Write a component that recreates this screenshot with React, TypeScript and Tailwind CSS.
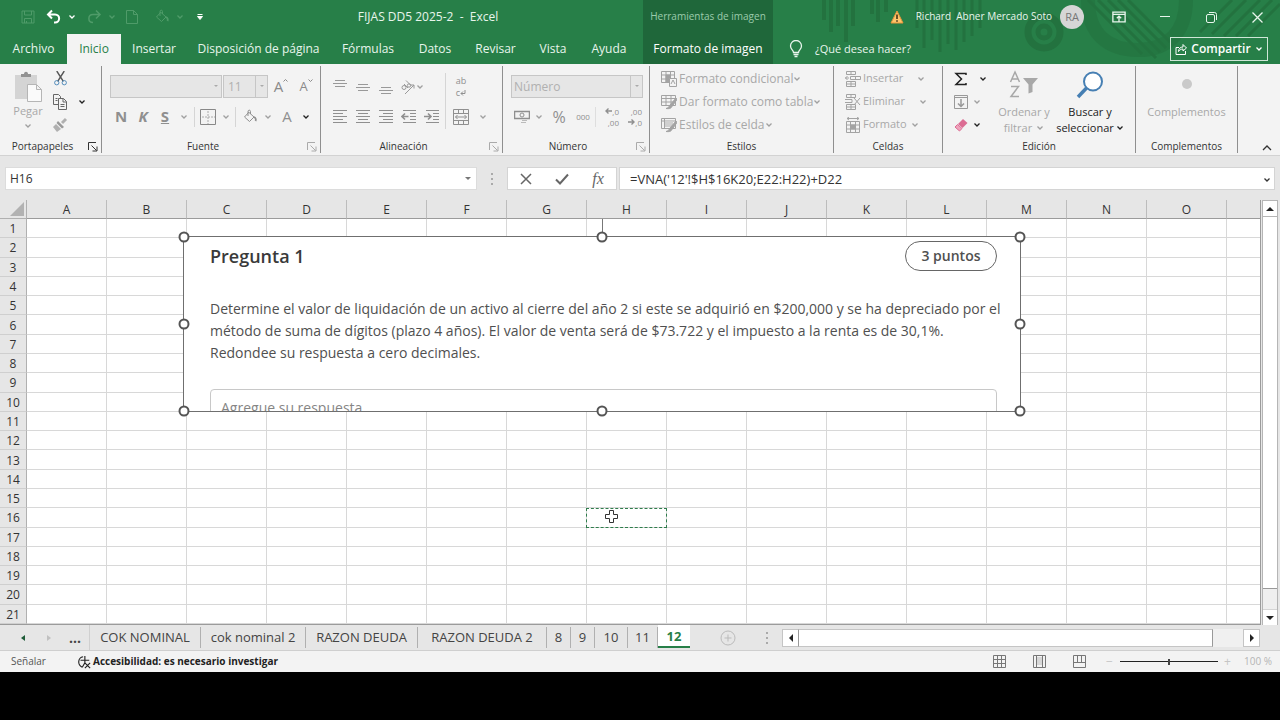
import React from "react";
import clsx from "clsx";

type IconProps = { className?: string };

function Chevron({ className = "text-[#a0a0a0]" }: IconProps) {
  return (
    <svg viewBox="0 0 8 6" className={clsx("h-1.5 w-2 shrink-0", className)} fill="none" stroke="currentColor" strokeWidth="1.3">
      <path d="M1.5 1.5 4 4l2.5-2.5" />
    </svg>
  );
}

function Svg(props: { size?: string; box?: string; className?: string; children: React.ReactNode }) {
  return (
    <svg viewBox={props.box ?? "0 0 16 16"} className={clsx("shrink-0", props.size ?? "h-4 w-4", props.className)} fill="none" stroke="currentColor" strokeWidth="1">
      {props.children}
    </svg>
  );
}

function Tool(props: { label: string; width: string; className?: string; children: React.ReactNode }) {
  return (
    <button aria-label={props.label} className={clsx("flex h-[23px] shrink-0 items-center justify-center", props.width, props.className)}>
      {props.children}
    </button>
  );
}

function Launcher({ className }: IconProps) {
  return (
    <Svg box="0 0 10 10" size="h-2.5 w-2.5" className={className}>
      <path d="M.5 8V.5H8M3.5 3.5l5 5M9 4.5V9H4.5" />
    </Svg>
  );
}

function Group(props: { name: string; width: string; launcher?: string; children: React.ReactNode }) {
  return (
    <section aria-label={props.name} className={clsx("flex h-[87px] shrink-0 flex-col border-r border-[#8f8f8f]", props.width)}>
      <div className="flex h-[74px] shrink-0 pt-px">{props.children}</div>
      <div className={clsx("relative text-center text-[10px] leading-[13px] text-[#333]", props.launcher && "pr-4")}>
        {props.name}
        {props.launcher && (
          <button aria-label={`Más opciones de ${props.name}`} className="absolute right-[3px] top-0.5">
            <Launcher className={props.launcher} />
          </button>
        )}
      </div>
    </section>
  );
}

function Lines({ rows }: { rows: number[][] }) {
  return (
    <Svg>
      {rows.map(([x1, x2, y]) => (
        <path key={y} d={`M${x1} ${y}.5H${x2}`} />
      ))}
    </Svg>
  );
}

function SmallArrow({ right }: { right?: boolean }) {
  return (
    <Svg box="0 0 7 6" size="h-1.5 w-[7px]">
      <path d={right ? "M0 3h6M3.5.5 6 3 3.5 5.500" : "M7 3H1M3.5.5 1 3l2.500 2.500"} strokeWidth="1.400" />
    </Svg>
  );
}

function BucketIcon({ className }: IconProps) {
  return (
    <Svg className={className}>
      <path d="M7 3 2.5 8 7.5 12.500 12 8 6.500 3M6 7V2.500c0-1.800 2.500-1.800 2.500 0V5" />
      <path d="M12 8c2 1 2 3 1.500 4" strokeWidth="1.800" />
    </Svg>
  );
}

function HeaderArt() {
  return (
    <svg className="absolute right-0 top-0 h-16 w-[507px]" viewBox="773 0 507 64" fill="none" stroke="#23723f">
      <g strokeWidth="4">
        <path d="M824 0v20M831 0v32M838 0v26M846 0v42M853 0v26M872 0v14M878 0v22M886 0v12" />
        <path d="M917 0v28M924 0v48M932 0v40M940 0v52M948 0v44M956 0v50M964 0v42M972 0v36M980 0v28" strokeWidth="3" />
      </g>
      <circle cx="1044" cy="32" r="16" strokeWidth="7" />
      <circle cx="1044" cy="32" r="6" strokeWidth="5" />
      <path d="M1088 0c0 34 20 50 50 50s48-18 48-50" strokeWidth="14" opacity=".6" />
      <g strokeWidth="3">
        <path d="M1098 0l58 58M1108 0l52 52M1118 0l48 48M1128 0l42 42M1088 0l54 54" />
        <path d="M1200 32l32-32M1212 34l34-34M1224 36l36-36M1236 36l36-36M1248 36l32-32" />
      </g>
    </svg>
  );
}

const tabs = [
  { name: "Archivo", width: "w-[67px]" },
  { name: "Inicio", width: "w-[54px]" },
  { name: "Insertar", width: "w-[66px]" },
  { name: "Disposición de página", width: "w-[143px]" },
  { name: "Fórmulas", width: "w-[76px]" },
  { name: "Datos", width: "w-[58px]" },
  { name: "Revisar", width: "w-[63px]" },
  { name: "Vista", width: "w-[52px]" },
  { name: "Ayuda", width: "w-[60px]" },
];

function Header() {
  return (
    <header className="relative flex h-16 bg-[#277f48] text-xs text-[#e8f5ec]">
      <HeaderArt />
      <div className="w-[643px] shrink-0">
        <div className="flex h-[34px] items-center">
          <div className="flex w-[213px] items-center pl-4 text-[#4f9b69]">
            <Tool label="Guardar" width="w-6">
              <Svg><path d="M2 2h12v12H2zM4.500 2v4h7V2M4.500 14V9.500h7V14M6.500 12v2" /></Svg>
            </Tool>
            <Tool label="Deshacer" width="w-7" className="text-white">
              <Svg><path d="M6 1.500 2 5.500l4 4M2.500 5.500H9c5.500 0 5.500 8 0 8H8" strokeWidth="2" /></Svg>
            </Tool>
            <Chevron className="text-white" />
            <Tool label="Rehacer" width="w-7" className="ml-1">
              <Svg><path d="M10 1.500l4 4-4 4M13.500 5.500H7c-5.500 0-5.500 8 0 8" strokeWidth="1.500" /></Svg>
            </Tool>
            <Chevron className="text-[#4f9b69]" />
            <Tool label="Nuevo" width="w-8">
              <Svg><path d="M2.500 1.500h7l4 4v9h-11zM9.500 1.500v4h4" /></Svg>
            </Tool>
            <Tool label="Color de relleno" width="w-7">
              <BucketIcon />
            </Tool>
            <Chevron className="text-[#4f9b69]" />
            <Tool label="Personalizar barra" width="w-8" className="text-white">
              <Svg box="0 0 8 8" size="h-2 w-2"><path d="M1.500 1.500h5" /><path d="M1.500 3.500h5L4 6.500z" fill="currentColor" /></Svg>
            </Tool>
          </div>
          <h1 className="flex-1 whitespace-pre text-center">FIJAS DD5 2025-2  -  Excel</h1>
        </div>
        <nav className="flex h-[30px]">
          {tabs.map((tab) => (
            <button
              key={tab.name}
              className={clsx("shrink-0 whitespace-nowrap text-center", tab.width, tab.name === "Inicio" && "bg-[#f3f3f3] text-[#277f48]")}
            >
              {tab.name}
            </button>
          ))}
        </nav>
      </div>
      <div className="flex w-[130px] shrink-0 flex-col bg-[#1f673a] text-center">
        <span className="h-[34px] text-[10px] leading-8 text-[#9ccbac]">Herramientas de imagen</span>
        <button className="h-[30px] font-medium text-white">Formato de imagen</button>
      </div>
      <div className="relative min-w-0 flex-1">
        <div className="flex h-[34px] items-center justify-end">
          <svg viewBox="0 0 14 14" className="h-3.5 w-3.5">
            <path d="M7 1 13 13H1z" fill="#ffc56b" stroke="#e8943a" />
            <path d="M7 4.500v4.500M7 10.300v1.500" stroke="#3a2a10" strokeWidth="1.500" />
          </svg>
          <span className="ml-3 whitespace-pre text-[10px]">Richard  Abner Mercado Soto</span>
          <span className="ml-2 mr-3 flex h-6 w-6 items-center justify-center rounded-full bg-[#d6d6d6] text-[11px] text-[#777]">RA</span>
          <Tool label="Opciones de la cinta" width="w-[46px]">
            <Svg size="h-3.5 w-3.5"><path d="M1 2.500h14v11H1zM1 5h14M8 13V7M5.500 9.500 8 7l2.500 2.500" strokeWidth="1.500" /></Svg>
          </Tool>
          <Tool label="Minimizar" width="w-[46px]">
            <Svg box="0 0 10 10" size="h-2.5 w-2.5"><path d="M0 4.500h10" /></Svg>
          </Tool>
          <Tool label="Restaurar" width="w-[46px]">
            <Svg box="0 0 11 11" size="h-[11px] w-[11px]"><rect x=".5" y="2.500" width="8" height="8" rx="1.500" /><path d="M3 .5h5.500a2 2 0 0 1 2 2V8" /></Svg>
          </Tool>
          <Tool label="Cerrar" width="w-[46px]">
            <Svg box="0 0 11 11" size="h-[11px] w-[11px]"><path d="M.5.5l10 10M10.500.5l-10 10" strokeWidth="1.300" /></Svg>
          </Tool>
        </div>
        <div className="flex h-[30px] items-center justify-between pl-4 pr-3">
          <button className="flex items-center gap-3 text-[11px]">
            <Svg box="0 0 14 18" size="h-[18px] w-3.5">
              <path d="M4.500 12.500C4.500 10 1.500 9.500 1.500 6a5.500 5.500 0 0 1 11 0c0 3.500-3 4-3 6.500zM4.500 14.500h5M5.500 16.500h3" strokeWidth="1.300" />
            </Svg>
            ¿Qué desea hacer?
          </button>
          <button className="flex h-6 w-[98px] items-center justify-center gap-1 border border-[#cfe6d7] font-semibold text-white">
            <Svg box="0 0 12 12" size="h-3 w-3"><path d="M4 4.500H1v7h9.500V8M3.500 8.500c0-3 2-4.500 4.500-4.500V1.500L11.500 5 8 8V6C6 6 4.500 7 3.500 8.500z" /></Svg>
            Compartir
            <Chevron className="text-white" />
          </button>
        </div>
      </div>
    </header>
  );
}

function TableIcon({ kind }: { kind: string }) {
  return (
    <Svg className="text-[#a3a3a3]">
      {kind === "rule" && (
        <>
          <path d="M.5.5h13v11H.5zM.5 4h13M.5 8h13M5 .5v11M9.500.5v11" />
          <path d="M5 4h4v7H5z" fill="currentColor" />
          <path d="M8.500 7.500h7v8h-7zM10 13l2-4 2 4" fill="#f3f3f3" />
        </>
      )}
      {kind === "table" && (
        <>
          <path d="M.5 1.500h14v10H.5zM.5 4.500h14M.5 8h14M5 1.500v10M10 1.500v10" />
          <path d="M15 4 9 11c-1 2-2 3-4 3.500 3 .5 5 0 6-2l5-7z" fill="#a3a3a3" />
        </>
      )}
      {kind === "style" && (
        <>
          <path d="M.5 1.500h14v10H.5zM.5 4h14M3.500 1.500v10" />
          <path d="M4 4h8v6H4z" fill="#d0d0d0" stroke="none" />
          <path d="M15 4 9 11c-1 2-2 3-4 3.500 3 .5 5 0 6-2l5-7z" fill="#a3a3a3" />
        </>
      )}
      {kind === "insert" && <path d="M1.500.5h9v3h-9zM6 .5v3M1.500 10.500h9v5h-9zM1.500 13h9M6 10.500v5M5.500 5.500h10v3h-10zM10.500 5.500v3M0 7h4M2.500 5 .5 7l2 2" />}
      {kind === "delete" && <path d="M1.500.5h9v3h-9zM6 .5v3M1.500 10.500h9v5h-9zM1.500 13h9M6 10.500v5M0 5.500h7v3H0M9 4l6 7M15 4 9 11" />}
      {kind === "format" && (
        <>
          <path d="M1.500 4.500h13v11h-13zM1.500 8h13M1.500 12h13M5.500 4.500v11M10.500 4.500v11M2 1.500h12M4 0 2 1.500 4 3M12 0l2 1.500L12 3" />
          <path d="M5.500 8h5v4h-5z" fill="currentColor" />
        </>
      )}
    </Svg>
  );
}

function RowButton(props: { icon: string; label: string; gap?: string }) {
  return (
    <button className="flex h-[23px] items-center whitespace-nowrap text-left">
      <TableIcon kind={props.icon} />
      <span className={clsx("ml-0.5", props.gap)}>{props.label}</span>
      <Chevron />
    </button>
  );
}

function Ribbon() {
  return (
    <div className="flex h-[92px] overflow-hidden border-b border-[#d2d2d2] bg-[#f3f3f3] pt-0.5 text-[11px] text-[#a8a8a8]">
      <Group name="Portapapeles" width="w-[102px]" launcher="text-[#333]">
        <button className="ml-3 flex w-8 flex-col items-center pt-1">
          <Svg box="0 0 30 32" size="h-8 w-[30px]">
            <path d="M2 4h22v24H2z" fill="#d4d4d4" stroke="none" />
            <path d="M8 6V3h3c0-3 4-3 4 0h3v3z" fill="#929292" stroke="none" />
            <path d="M14.500 13.500h9l5 5v12h-14zM23.500 13.500v5h5" fill="#fafafa" stroke="#b5b5b5" />
          </Svg>
          <span className="leading-4">Pegar</span>
          <Chevron className="mt-1 text-[#a0a0a0]" />
        </button>
        <div className="ml-1 flex flex-col">
          <Tool label="Cortar" width="w-6">
            <Svg size="h-[15px] w-[15px]"><path d="M4 0l7 11M12 0 5 11" stroke="#555" strokeWidth="1.500" /><circle cx="4" cy="12.500" r="2.300" stroke="#4b86b8" /><circle cx="12" cy="12.500" r="2.300" stroke="#4b86b8" /></Svg>
          </Tool>
          <Tool label="Copiar" width="w-[34px]" className="ml-1 gap-2.5">
            <Svg className="text-[#666]"><path d="M6 10.500H1.500v-10h5l2 2V4M6.500 4.500h5l3 3v8h-8zM11 4.500V8h3.500M8.500 10.500h4M8.500 12.500h4M3.500 4.500h2M3.500 6.500h2" /></Svg>
            <Chevron className="text-[#222]" />
          </Tool>
          <Tool label="Copiar formato" width="w-6">
            <Svg className="text-[#b0b0b0]"><path d="M14 2 10 6" strokeWidth="3" /><path d="M6 4l6 6-2 1.500L4.500 6z" fill="#999" stroke="none" /><path d="M4 7l5 5-4 3-4-5z" fill="currentColor" stroke="none" /></Svg>
          </Tool>
        </div>
      </Group>

      <Group name="Fuente" width="w-[219px]" launcher="text-[#aaa]">
        <div className="pl-2 pt-2">
          <div className="flex h-[23px] gap-px">
            <div className="relative">
              <select aria-label="Fuente" className="h-[23px] w-28 appearance-none border border-[#c6c6c6] bg-[#e6e6e6]"><option> </option></select>
              <span className="absolute right-1 top-2.5 border-x-2 border-t-2 border-x-transparent border-t-[#aaa]" />
            </div>
            <div className="relative">
              <select aria-label="Tamaño" className="h-[23px] w-[45px] appearance-none border border-[#c6c6c6] bg-[#e6e6e6] pl-1 text-xs text-[#b0b0b0]"><option>11</option></select>
              <span className="absolute right-3 top-0 h-[23px] border-l border-[#c6c6c6]" />
              <span className="absolute right-1 top-2.5 border-x-2 border-t-2 border-x-transparent border-t-[#aaa]" />
            </div>
            <Tool label="Aumentar" width="w-6" className="text-[15px] text-[#8a8a8a]">
              A<Svg box="0 0 5 3" size="mb-3 h-[3px] w-[5px]"><path d="M.5 2.500l2-2 2 2" /></Svg>
            </Tool>
            <Tool label="Reducir" width="w-6" className="text-[13px] text-[#8a8a8a]">
              A<Svg box="0 0 5 3" size="mb-3 h-[3px] w-[5px]"><path d="M.5.5l2 2 2-2" /></Svg>
            </Tool>
          </div>
          <div className="mt-[7px] flex items-center text-[15px] text-[#8f8f8f]">
            <Tool label="Negrita" width="w-[22px]" className="font-bold">N</Tool>
            <Tool label="Cursiva" width="w-[22px]" className="font-bold italic">K</Tool>
            <Tool label="Subrayado" width="w-[22px]" className="font-bold underline">S</Tool>
            <Tool label="Tipos de subrayado" width="w-4"><Chevron /></Tool>
            <span className="mx-0.5 h-5 border-l border-[#d5d5d5]" />
            <Tool label="Bordes" width="w-[22px]"><Svg><path d="M.5.5h15v15H.5z" stroke="#888" /><path d="M8 2v13M2 8h13" stroke="#aaa" strokeDasharray="2 1" /></Svg></Tool>
            <Tool label="Más bordes" width="w-3.5"><Chevron /></Tool>
            <span className="mx-0.5 h-5 border-l border-[#d5d5d5]" />
            <Tool label="Relleno" width="w-6"><BucketIcon /></Tool>
            <Tool label="Más rellenos" width="w-3"><Chevron /></Tool>
            <Tool label="Color de fuente" width="w-[26px]">A</Tool>
            <Tool label="Más colores" width="w-3"><Chevron className="text-[#222]" /></Tool>
          </div>
        </div>
      </Group>

      <Group name="Alineación" width="w-[182px]" launcher="text-[#aaa]">
        <div className="pl-[7px] pt-2">
          <div className="flex text-[#999]">
            <Tool label="Arriba" width="w-[23px]"><Lines rows={[[3, 13, 1], [1, 15, 4], [3, 13, 7]]} /></Tool>
            <Tool label="Medio" width="w-[23px]"><Lines rows={[[3, 13, 5], [1, 15, 8], [3, 13, 11]]} /></Tool>
            <Tool label="Abajo" width="w-[23px]"><Lines rows={[[3, 13, 8], [1, 15, 11], [3, 13, 14]]} /></Tool>
            <Tool label="Orientación" width="w-[30px]">
              <Svg><path d="M5 15 14 6M10.500 6H14v3.500" /><circle cx="4" cy="8.500" r="2" /><path d="M4 5l4 4M6 1.500l5 5" /><circle cx="9" cy="6.500" r="1.700" /></Svg>
              <Chevron />
            </Tool>
          </div>
          <div className="mt-[7px] flex text-[#8f8f8f]">
            <Tool label="Izquierda" width="w-[23px]"><Lines rows={[[1, 15, 1], [1, 11, 4], [1, 15, 7], [1, 11, 10], [1, 15, 13]]} /></Tool>
            <Tool label="Centro" width="w-[23px]"><Lines rows={[[1, 15, 1], [3, 13, 4], [1, 15, 7], [3, 13, 10], [1, 15, 13]]} /></Tool>
            <Tool label="Derecha" width="w-[23px]"><Lines rows={[[1, 15, 1], [5, 15, 4], [1, 15, 7], [5, 15, 10], [1, 15, 13]]} /></Tool>
            <Tool label="Reducir sangría" width="w-[23px]"><Svg><path d="M2 1.500h13M9 4.500h6M9 7.500h6M9 10.500h6M2 13.500h13" /><path d="M7.500 7.500H1M4 4.500l-3 3 3 3" strokeWidth="1.600" /></Svg></Tool>
            <Tool label="Aumentar sangría" width="w-[23px]"><Svg><path d="M2 1.500h13M9 4.500h6M9 7.500h6M9 10.500h6M2 13.500h13" /><path d="M0 7.500h6.500M4 4.500l3 3-3 3" strokeWidth="1.600" /></Svg></Tool>
          </div>
        </div>
        <span className="ml-0.5 mt-1.5 h-14 border-l border-[#d5d5d5]" />
        <div className="ml-1 pt-2 text-[#8f8f8f]">
          <Tool label="Ajustar texto" width="w-[22px]" className="flex-col text-[9px] leading-3">
            <span>ab</span>
            <span className="flex items-center">c<Svg box="0 0 6 6" size="h-1.5 w-1.5"><path d="M5 0v3.500H1M3 1.500l-2 2 2 2" /></Svg></span>
          </Tool>
          <div className="mt-[7px] flex">
            <Tool label="Combinar" width="w-[22px]"><Svg><path d="M.5.5h15v15H.5zM.5 4.500h15M.5 11.500h15M5.500.5v4M10.500.5v4M5.500 11.500v4M10.500 11.500v4M2.500 8h11M4.500 6l-2 2 2 2M11.500 6l2 2-2 2" /></Svg></Tool>
            <Tool label="Más combinaciones" width="w-[22px]"><Chevron /></Tool>
          </div>
        </div>
      </Group>

      <Group name="Número" width="w-[147px]" launcher="text-[#aaa]">
        <div className="pl-2 pt-2">
          <div className="relative">
            <select aria-label="Formato de número" className="h-[23px] w-[132px] appearance-none border border-[#c6c6c6] bg-[#e6e6e6] pl-0.5 text-xs text-[#b0b0b0]"><option>Número</option></select>
            <span className="absolute right-3 top-0 h-[23px] border-l border-[#c6c6c6]" />
            <span className="absolute right-1 top-2.5 border-x-2 border-t-2 border-x-transparent border-t-[#aaa]" />
          </div>
          <div className="mt-[7px] flex items-center text-[#8f8f8f]">
            <Tool label="Moneda" width="w-[22px]"><Svg><path d="M.5 2.500h15v7H.5z" strokeWidth="1.500" /><circle cx="8" cy="6" r="2" /><path d="M8 11.500h5M7 13.500h5" stroke="#bbb" /></Svg></Tool>
            <Tool label="Más monedas" width="w-3"><Chevron /></Tool>
            <Tool label="Porcentaje" width="w-7" className="text-base">%</Tool>
            <Tool label="Millares" width="w-5" className="text-[8px]">000</Tool>
            <span className="ml-0.5 h-5 border-l border-[#dedede]" />
            <Tool label="Aumentar decimales" width="w-[23px]" className="flex-col items-end text-[8px] leading-[11px]">
              <span className="flex items-center"><SmallArrow />,0</span>
              <span>,00</span>
            </Tool>
            <Tool label="Disminuir decimales" width="w-[23px]" className="flex-col items-end text-[8px] leading-[11px]">
              <span>,00</span>
              <span className="flex items-center"><SmallArrow right />,0</span>
            </Tool>
          </div>
        </div>
      </Group>

      <Group name="Estilos" width="w-[184px]">
        <div className="pl-[11px] text-xs">
          <RowButton icon="rule" label="Formato condicional" />
          <RowButton icon="table" label="Dar formato como tabla" />
          <RowButton icon="style" label="Estilos de celda" />
        </div>
      </Group>

      <Group name="Celdas" width="w-[109px]">
        <div className="pl-[11px]">
          <RowButton icon="insert" label="Insertar" gap="mr-3.5" />
          <RowButton icon="delete" label="Eliminar" gap="mr-3.5" />
          <RowButton icon="format" label="Formato" gap="mr-1" />
        </div>
      </Group>

      <Group name="Edición" width="w-[193px]">
        <div className="ml-2.5">
          <Tool label="Autosuma" width="w-[34px]" className="gap-2.5 text-[#222]">
            <Svg><path d="M13 4V2.500H3L8.500 8 3 13.500h10V12" strokeWidth="1.500" /></Svg>
            <Chevron className="text-[#222]" />
          </Tool>
          <Tool label="Rellenar" width="w-7" className="gap-1">
            <Svg className="text-[#999]"><path d="M1.500 1.500h13v13h-13zM1.500 3.500h13" /><path d="M8 5v7M5 9.500 8 12.500l3-3" strokeWidth="1.500" /></Svg>
            <Chevron />
          </Tool>
          <Tool label="Borrar" width="w-7" className="gap-1">
            <Svg><path d="M10 2l4.500 4-5 5L5 7z" fill="#dc6c93" stroke="none" /><path d="M4.500 7.500 9 11.500 6.500 14 2 10z" fill="#f0a3bc" stroke="#dc6c93" /></Svg>
            <Chevron className="text-[#222]" />
          </Tool>
        </div>
        <button className="ml-2.5 flex w-[54px] flex-col items-center pt-[3px] leading-4">
          <Svg box="0 0 30 30" size="h-[30px] w-[30px]" className="text-[#a8a8a8]">
            <path d="M1.500 12 6 2l4.500 10M3 9h6M2 16.500h7.500L2 26.500h8" strokeWidth="1.500" />
            <path d="M14 8h15l-5.500 6.500V22l-4 1.500v-9z" fill="currentColor" stroke="none" />
          </Svg>
          <span className="mt-1 whitespace-nowrap">Ordenar y</span>
          <span className="flex items-center gap-1">filtrar <Chevron /></span>
        </button>
        <button className="ml-0.5 flex w-[74px] flex-col items-center pt-[3px] leading-4 text-[#222]">
          <Svg box="0 0 30 30" size="h-[30px] w-[30px]" className="text-[#467fb3]">
            <circle cx="18" cy="11.500" r="9" fill="#fff" strokeWidth="2" />
            <path d="M11.500 18 3 27" strokeWidth="3.500" />
          </Svg>
          <span className="mt-1 whitespace-nowrap">Buscar y</span>
          <span className="flex items-center gap-0.5">seleccionar <Chevron className="text-[#222]" /></span>
        </button>
      </Group>

      <Group name="Complementos" width="w-[102px]">
        <button className="flex w-full flex-col items-center pt-3 leading-4">
          <span className="h-2.5 w-2.5 rounded-full bg-[#c9c9c9]" />
          <span className="mt-[15px]">Complementos</span>
        </button>
      </Group>
      <button aria-label="Contraer la cinta" className="mb-1 ml-auto mr-2 self-end text-[#333]">
        <Svg box="0 0 10 6" size="h-1.5 w-2.5"><path d="M1 5l4-4 4 4" strokeWidth="1.300" /></Svg>
      </button>
    </div>
  );
}

function FormulaBar() {
  return (
    <div className="flex h-11 bg-[#e6e6e6] pb-2.5 pl-[5px] pr-[5px] pt-[11px] text-xs">
      <div className="relative shrink-0">
        <input aria-label="Cuadro de nombres" defaultValue="H16" className="h-[23px] w-[472px] border border-[#dcdcdc] bg-white pl-1 text-[#333]" />
        <span className="absolute right-1.5 top-2.5 border-x-[3px] border-t-[3px] border-x-transparent border-t-[#777]" />
      </div>
      <span className="flex w-[30px] shrink-0 items-center justify-center text-[#aaa]"><Dots /></span>
      <div className="flex w-[110px] shrink-0 items-center border border-[#d4d4d4] bg-white text-[#666]">
        <Tool label="Cancelar" width="w-[36px]"><Svg box="0 0 12 12" size="h-3 w-3"><path d="M1 1l10 10M11 1 1 11" strokeWidth="1.500" /></Svg></Tool>
        <Tool label="Introducir" width="w-[36px]"><Svg box="0 0 14 12" size="h-3 w-3.5"><path d="M1 6.500 5 10.500 13 1.500" strokeWidth="2" /></Svg></Tool>
        <Tool label="Insertar función" width="w-[36px]" className="font-['Liberation_Serif',serif] text-base italic">fx</Tool>
      </div>
      <div className="relative ml-0.5 min-w-0 flex-1">
        <input
          aria-label="Barra de fórmulas"
          defaultValue="=VNA('12'!$H$16K20;E22:H22)+D22"
          className="h-[23px] w-full border border-[#d4d4d4] bg-white pl-2.5 text-[13px] text-[#333]"
        />
        <Chevron className="absolute right-1 top-2.5 text-[#333]" />
      </div>
    </div>
  );
}

function Dots() {
  return (
    <svg viewBox="0 0 2 12" className="h-3 w-0.5" fill="currentColor">
      <path d="M0 0h2v2H0zM0 5h2v2H0zM0 10h2v2H0z" />
    </svg>
  );
}

const columns = "ABCDEFGHIJKLMNO".split("");
const rows = Array.from({ length: 21 }, (_, i) => i + 1);

const handles = [
  "left-0 top-0",
  "left-1/2 top-0",
  "left-full top-0",
  "left-0 top-1/2",
  "left-full top-1/2",
  "left-0 top-full",
  "left-1/2 top-full",
  "left-full top-full",
];

function QuestionPicture() {
  return (
    <div className="absolute left-[183px] top-9 h-44 w-[838px] border border-[#6f6f6f] bg-white text-sm text-[#505050]">
      <div className="h-full overflow-hidden pl-[26px] pr-[23px] pt-1">
        <div className="flex items-center justify-between">
          <h2 className="text-lg font-semibold text-[#3a3a3a]">Pregunta 1</h2>
          <span className="flex h-[30px] w-[92px] items-center justify-center rounded-full border border-[#666] font-semibold">3 puntos</span>
        </div>
        <p className="mt-[27px] whitespace-nowrap leading-[22px]">
          Determine el valor de liquidación de un activo al cierre del año 2 si este se adquirió en $200,000 y se ha depreciado por el
          <br />
          método de suma de dígitos (plazo 4 años). El valor de venta será de $73.722 y el impuesto a la renta es de 30,1%.
          <br />
          Redondee su respuesta a cero decimales.
        </p>
        <input
          aria-label="Respuesta"
          placeholder="Agregue su respuesta"
          className="mt-[25px] h-9 w-full rounded-sm border border-[#c8c8c8] px-2.5 placeholder:text-[#858585]"
        />
      </div>
      <span className="absolute -top-[18px] left-1/2 h-[17px] border-l border-[#777]" />
      {handles.map((place) => (
        <span key={place} className={clsx("absolute h-[11px] w-[11px] -translate-x-1/2 -translate-y-1/2 rounded-full border-2 border-[#555] bg-white", place)} />
      ))}
    </div>
  );
}

function Sheet() {
  return (
    <div className="flex bg-[#e6e6e6]">
      <div className="relative min-w-0 flex-1 overflow-hidden border-b border-r border-[#9b9b9b]">
        <table className="h-[424px] w-full table-fixed border-separate border-spacing-0 bg-white text-xs text-[#333]">
          <colgroup>
            <col className="w-[27px]" />
            {columns.map((c) => (
              <col key={c} className="w-20" />
            ))}
            <col />
          </colgroup>
          <thead>
            <tr className="h-[19px] bg-[#e6e6e6]">
              <th className="border-b border-r border-[#b0b0b0] p-0">
                <svg viewBox="0 0 14 14" className="ml-auto mr-0.5 h-3.5 w-3.5"><path d="M14 0v14H0z" fill="#b2b2b2" /></svg>
              </th>
              {columns.map((c) => (
                <th key={c} scope="col" className="border-b border-r border-b-[#9b9b9b] border-r-[#bcbcbc] px-0 pb-0 pt-0.5 font-normal leading-4">{c}</th>
              ))}
              <th className="border-b border-[#9b9b9b] p-0" />
            </tr>
          </thead>
          <tbody>
            {rows.map((r) => (
              <tr key={r}>
                <th scope="row" className="border-b border-r border-b-[#cfcfcf] border-r-[#b0b0b0] bg-[#e6e6e6] px-0 pb-0 pt-0.5 font-normal leading-4">{r}</th>
                {columns.map((c) => (
                  <td key={c} className="border-b border-r border-[#d8d8d8] p-0" />
                ))}
                <td className="border-b border-[#d8d8d8] p-0" />
              </tr>
            ))}
          </tbody>
        </table>
        <QuestionPicture />
        <span className="absolute left-[586px] top-[308px] h-5 w-[81px] border border-dashed border-[#2f7d4c]" />
        <svg viewBox="0 0 15 15" className="absolute left-[604px] top-[309px] h-[15px] w-[15px]" fill="#fff" stroke="#333">
          <path d="M5.500 1.500h4v4h4v4h-4v4h-4v-4h-4v-4h4z" />
        </svg>
      </div>
      <div className="ml-px mr-0.5 flex w-4 flex-col border-x border-[#b5b5b5] bg-[#efefef]">
        <button aria-label="Subir" className="flex h-[17px] items-center justify-center border-y border-[#b5b5b5] bg-white">
          <span className="border-x-4 border-b-4 border-x-transparent border-b-[#222]" />
        </button>
        <div className="flex-1 border-b border-[#999] bg-white" />
        <button aria-label="Bajar" className="mt-5 flex h-4 items-center justify-center border-t border-[#d5d5d5] bg-white">
          <span className="border-x-4 border-t-4 border-x-transparent border-t-[#222]" />
        </button>
      </div>
    </div>
  );
}

const sheets = [
  { name: "COK NOMINAL", width: "w-[111px]" },
  { name: "cok nominal 2", width: "w-[105px]" },
  { name: "RAZON DEUDA", width: "w-28" },
  { name: "RAZON DEUDA 2", width: "w-[129px]" },
  { name: "8", width: "w-6" },
  { name: "9", width: "w-6" },
  { name: "10", width: "w-[33px]" },
  { name: "11", width: "w-[30px]" },
];

function SheetTabs() {
  return (
    <div className="flex h-[26px] border-b border-[#cfcfcf] bg-[#e6e6e6] text-[13px] text-[#444]">
      <div className="flex w-[90px] shrink-0 items-center border-r border-[#d0d0d0] pl-[21px]">
        <button aria-label="Anterior" className="border-y-[3px] border-r-4 border-y-transparent border-r-[#1f5c38]" />
        <button aria-label="Siguiente" className="ml-[22px] border-y-[3px] border-l-4 border-y-transparent border-l-[#c0c0c0]" />
        <span className="ml-[18px] text-sm font-bold">...</span>
      </div>
      {sheets.map((s) => (
        <button key={s.name} className={clsx("my-0.5 shrink-0 whitespace-nowrap border-r border-[#b0b0b0] text-center", s.width)}>{s.name}</button>
      ))}
      <button className="mb-0.5 w-8 shrink-0 border-b-2 border-[#277f48] bg-white pt-0.5 font-bold text-[#277f48]">12</button>
      <button aria-label="Hoja nueva" className="ml-[30px] shrink-0 text-[#bbb]">
        <Svg><circle cx="8" cy="8" r="7" /><path d="M8 4.500v7M4.500 8h7" /></Svg>
      </button>
      <span className="ml-[30px] flex w-4 shrink-0 items-center text-[#aaa]"><Dots /></span>
      <div className="mr-5 mt-1 flex h-[18px] min-w-0 flex-1 bg-[#f0f0f0]">
        <button aria-label="Izquierda" className="flex w-[17px] items-center justify-center border border-[#c5c5c5] border-r-[#999] bg-white">
          <span className="border-y-4 border-r-4 border-y-transparent border-r-[#222]" />
        </button>
        <div className="flex-1 border-y border-r border-[#c5c5c5] border-r-[#999] bg-white" />
        <button aria-label="Derecha" className="ml-[30px] flex w-[17px] items-center justify-center border border-[#c5c5c5] bg-white">
          <span className="border-y-4 border-l-4 border-y-transparent border-l-[#222]" />
        </button>
      </div>
    </div>
  );
}

function StatusBar() {
  return (
    <footer className="flex h-[21px] items-center bg-[#f3f3f3] pl-[11px] pr-2 text-[10px] text-[#555]">
      <span className="w-[66px]">Señalar</span>
      <button className="flex items-center gap-0.5 font-bold text-[#222]">
        <Svg size="h-3.5 w-3.5"><path d="M7 2C1 3 0 11 6 14M9 1v4M4 6h10M9 5v4l-3 5M9 9l6 6M15 9l-6 6" strokeWidth="1.300" /></Svg>
        Accesibilidad: es necesario investigar
      </button>
      <div className="ml-auto flex items-center text-[#777]">
        <Tool label="Normal" width="w-10"><Svg box="0 0 13 13" size="h-[13px] w-[13px]"><path d="M.5.5h12v12H.5zM.5 4.500h12M.5 8.500h12M4.500.5v12M8.500.5v12" /></Svg></Tool>
        <Tool label="Diseño de página" width="w-10"><Svg box="0 0 13 13" size="h-[13px] w-[13px]"><path d="M.5.5h12v12H.5zM3.500.5v12M9.500.5v12" /><path d="M4 3h5M4 5h5M4 7h5M4 9h5" stroke="#bbb" /></Svg></Tool>
        <Tool label="Saltos de página" width="w-10"><Svg box="0 0 13 13" size="h-[13px] w-[13px]"><path d="M.5.5h12v12H.5zM4.500.5v7M8.500.5v7M.5 7.500h12" /></Svg></Tool>
        <span className="ml-1.5 w-3.5 text-xs leading-none text-[#c5c5c5]">−</span>
        <input
          type="range"
          aria-label="Zoom"
          className="h-2 w-[98px] appearance-none bg-[linear-gradient(#222,#222)] bg-[length:100%_1px] bg-center bg-no-repeat [&::-webkit-slider-thumb]:h-1.5 [&::-webkit-slider-thumb]:w-0.5 [&::-webkit-slider-thumb]:appearance-none [&::-webkit-slider-thumb]:bg-[#444]"
        />
        <span className="ml-1.5 w-5 text-xs leading-none text-[#c5c5c5]">+</span>
        <span className="text-[#b5b5b5]">100 %</span>
      </div>
    </footer>
  );
}

export default function App() {
  return (
    <div className="min-h-screen bg-black font-['Open_Sans','Noto_Sans',sans-serif]">
      <Header />
      <Ribbon />
      <FormulaBar />
      <Sheet />
      <SheetTabs />
      <StatusBar />
    </div>
  );
}
